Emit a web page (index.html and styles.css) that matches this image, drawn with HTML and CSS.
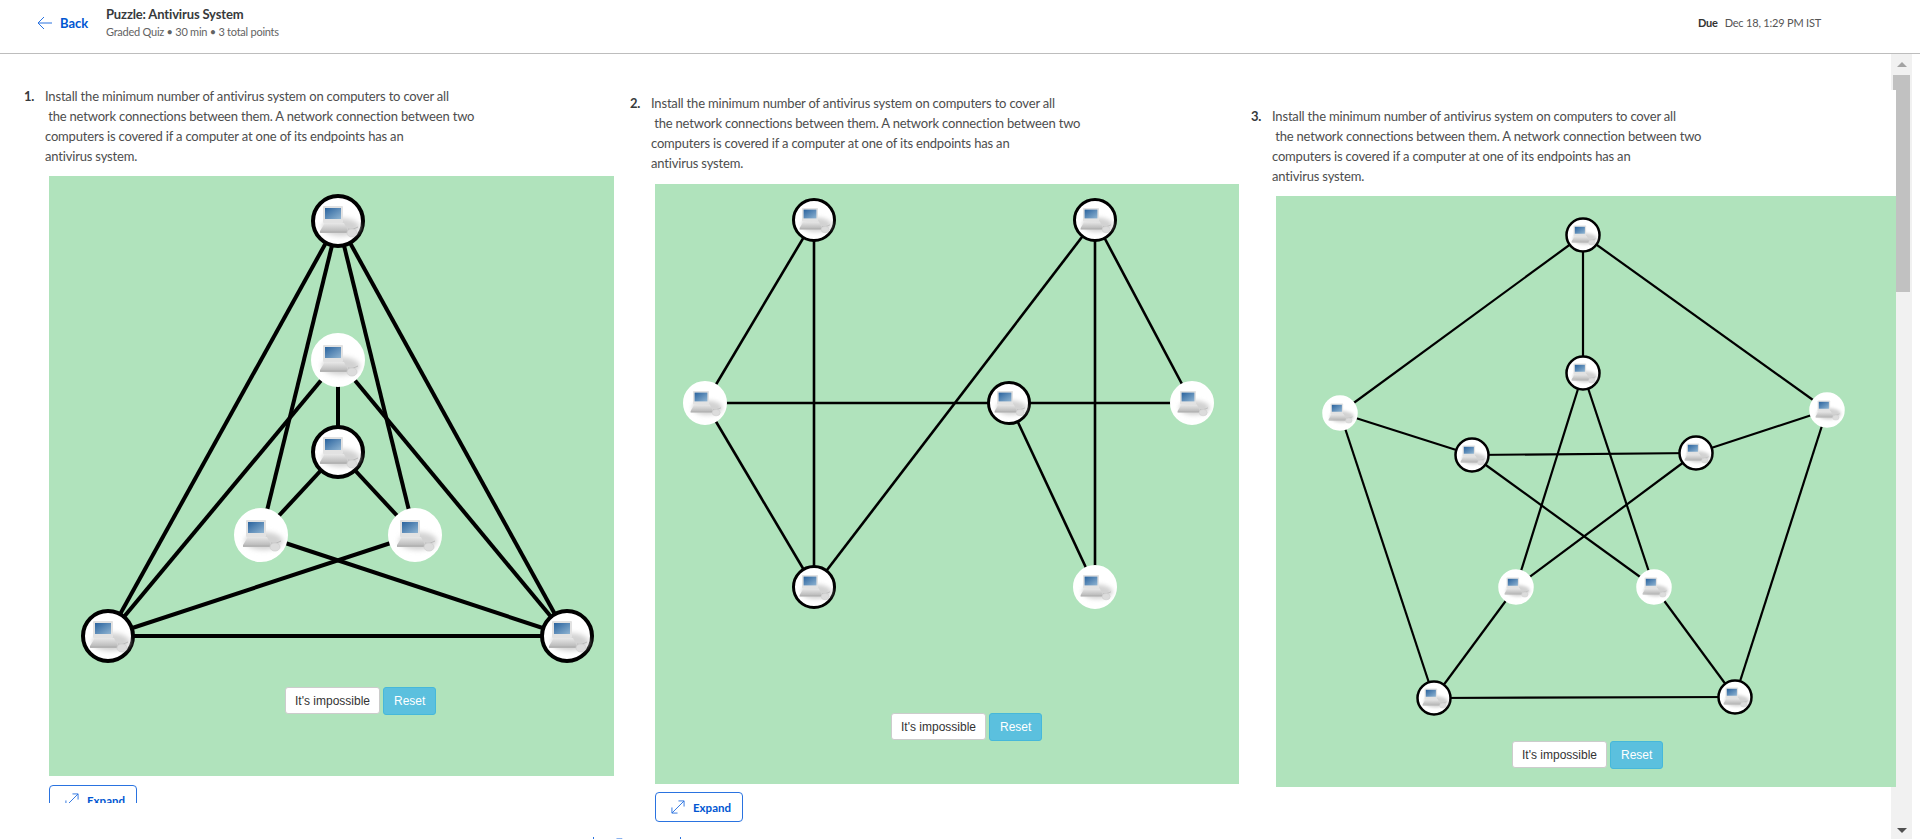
FILE: index.html
```html
<!DOCTYPE html>
<html lang="en">
<head>
    <meta charset="UTF-8">
    <title>Puzzle: Antivirus System</title>
    <link rel="stylesheet" href="styles.css">
</head>
<body>
    <header class="topbar">
        <a class="back" href="#">
            <svg class="back-icon" width="15" height="14" viewBox="0 0 15 14"><path d="M7 1 1 7l6 6M1 7h14"/></svg>
            <span>Back</span>
        </a>
        <div class="quiz-info">
            <div class="quiz-title">Puzzle: Antivirus System</div>
            <div class="quiz-meta">Graded Quiz &bull; 30 min &bull; 3 total points</div>
        </div>
        <div class="due"><b>Due</b><span>Dec 18, 1:29 PM IST</span></div>
    </header>

    <main class="content">
        <div class="scrollbar">
            <div class="arrow-up"></div>
            <div class="thumb"></div>
            <div class="arrow-down"></div>
        </div>

        <div class="columns">
            <!-- question 1 is cut off by its frame just under the expand button -->
            <section class="question question-1">
                <div class="prompt">
                    <span class="num">1.</span>
                    <div class="text">
                        <div>Install the minimum number of antivirus system on computers to cover all</div>
                        <div>&nbsp;the network connections between them. A network connection between two</div>
                        <div>computers is covered if a computer at one of its endpoints has an</div>
                        <div>antivirus system.</div>
                    </div>
                </div>
                <div class="panel panel-1">
                    <svg class="graph graph-lg">
                        <defs>
                            <linearGradient id="screen" x1="0" y1="0" x2="1" y2="1">
                                <stop offset="0" stop-color="#2a639e"/>
                                <stop offset="1" stop-color="#8fb4d2"/>
                            </linearGradient>
                            <linearGradient id="keys" x1="0" y1="0" x2="0" y2="1">
                                <stop offset="0" stop-color="#e8e8e8"/>
                                <stop offset="1" stop-color="#bcbcbc"/>
                            </linearGradient>
                            <filter id="soft" x="-30%" y="-30%" width="160%" height="160%">
                                <feGaussianBlur stdDeviation="2.5"/>
                            </filter>
                            <g id="pc">
                                <ellipse cx="3" cy="6" rx="19" ry="9" fill="#d2d2d2" filter="url(#soft)"/>
                                <rect x="-15" y="-15" width="20" height="17" rx="1" fill="#e2e2e2"/>
                                <rect x="-13" y="-13" width="16" height="11" fill="url(#screen)"/>
                                <path d="M-13 2H6l4 8H-18z" fill="url(#keys)"/>
                                <path d="M-18 10h28v2h-28z" fill="#b4b4b4"/>
                                <path d="M10 8c3 1 6 0 10-2" fill="none" stroke="#bbb" stroke-width="1"/>
                                <ellipse cx="14" cy="12" rx="5" ry="4" fill="#dcdcdc" stroke="#cfcfcf" stroke-width=".8"/>
                            </g>
                        </defs>
                        <g class="edges">
                            <line x1="289" y1="45" x2="59" y2="460"/>
                            <line x1="289" y1="45" x2="518" y2="460"/>
                            <line x1="289" y1="45" x2="212" y2="359"/>
                            <line x1="289" y1="45" x2="366" y2="359"/>
                            <line x1="289" y1="184" x2="289" y2="276"/>
                            <line x1="289" y1="184" x2="59" y2="460"/>
                            <line x1="289" y1="184" x2="518" y2="460"/>
                            <line x1="289" y1="276" x2="212" y2="359"/>
                            <line x1="289" y1="276" x2="366" y2="359"/>
                            <line x1="212" y1="359" x2="518" y2="460"/>
                            <line x1="366" y1="359" x2="59" y2="460"/>
                            <line x1="59" y1="460" x2="518" y2="460"/>
                        </g>
                        <g transform="translate(289 45)"><circle class="on" r="25"/><use href="#pc"/></g>
                        <g transform="translate(289 184)"><circle class="off" r="25"/><use href="#pc"/></g>
                        <g transform="translate(289 276)"><circle class="on" r="25"/><use href="#pc"/></g>
                        <g transform="translate(212 359)"><circle class="off" r="25"/><use href="#pc"/></g>
                        <g transform="translate(366 359)"><circle class="off" r="25"/><use href="#pc"/></g>
                        <g transform="translate(59 460)"><circle class="on" r="25"/><use href="#pc"/></g>
                        <g transform="translate(518 460)"><circle class="on" r="25"/><use href="#pc"/></g>
                    </svg>
                    <div class="actions">
                        <button class="btn">It's impossible</button>
                        <button class="btn btn-reset">Reset</button>
                    </div>
                </div>
                <a class="expand" href="#">
                    <svg class="expand-icon" width="14" height="14" viewBox="0 0 15 15"><path d="M1 14 14 1M8 1h6v6M1 8v6h6"/></svg>
                    <span>Expand</span>
                </a>
            </section>

            <section class="question question-2">
                <div class="prompt">
                    <span class="num">2.</span>
                    <div class="text">
                        <div>Install the minimum number of antivirus system on computers to cover all</div>
                        <div>&nbsp;the network connections between them. A network connection between two</div>
                        <div>computers is covered if a computer at one of its endpoints has an</div>
                        <div>antivirus system.</div>
                    </div>
                </div>
                <div class="panel panel-2">
                    <svg class="graph graph-md">
                        <g class="edges">
                            <line x1="159" y1="36" x2="50" y2="219"/>
                            <line x1="159" y1="36" x2="159" y2="403"/>
                            <line x1="50" y1="219" x2="159" y2="403"/>
                            <line x1="50" y1="219" x2="537" y2="219"/>
                            <line x1="440" y1="36" x2="159" y2="403"/>
                            <line x1="440" y1="36" x2="440" y2="403"/>
                            <line x1="440" y1="36" x2="537" y2="219"/>
                            <line x1="354" y1="219" x2="440" y2="403"/>
                        </g>
                        <g transform="translate(159 36)"><circle class="on" r="20.5"/><use href="#pc" transform="scale(.8)"/></g>
                        <g transform="translate(440 36)"><circle class="on" r="20.5"/><use href="#pc" transform="scale(.8)"/></g>
                        <g transform="translate(50 219)"><circle class="off" r="20.5"/><use href="#pc" transform="scale(.8)"/></g>
                        <g transform="translate(354 219)"><circle class="on" r="20.5"/><use href="#pc" transform="scale(.8)"/></g>
                        <g transform="translate(537 219)"><circle class="off" r="20.5"/><use href="#pc" transform="scale(.8)"/></g>
                        <g transform="translate(159 403)"><circle class="on" r="20.5"/><use href="#pc" transform="scale(.8)"/></g>
                        <g transform="translate(440 403)"><circle class="off" r="20.5"/><use href="#pc" transform="scale(.8)"/></g>
                    </svg>
                    <div class="actions">
                        <button class="btn">It's impossible</button>
                        <button class="btn btn-reset">Reset</button>
                    </div>
                </div>
                <a class="expand" href="#">
                    <svg class="expand-icon" width="14" height="14" viewBox="0 0 15 15"><path d="M1 14 14 1M8 1h6v6M1 8v6h6"/></svg>
                    <span>Expand</span>
                </a>
            </section>

            <section class="question question-3">
                <div class="prompt">
                    <span class="num">3.</span>
                    <div class="text">
                        <div>Install the minimum number of antivirus system on computers to cover all</div>
                        <div>&nbsp;the network connections between them. A network connection between two</div>
                        <div>computers is covered if a computer at one of its endpoints has an</div>
                        <div>antivirus system.</div>
                    </div>
                </div>
                <div class="panel panel-3">
                    <svg class="graph graph-sm">
                        <g class="edges">
                            <line x1="307" y1="39" x2="307" y2="177"/>
                            <line x1="307" y1="39" x2="64" y2="217"/>
                            <line x1="307" y1="39" x2="551" y2="214"/>
                            <line x1="64" y1="217" x2="196" y2="259"/>
                            <line x1="551" y1="214" x2="420" y2="257"/>
                            <line x1="64" y1="217" x2="158" y2="502"/>
                            <line x1="551" y1="214" x2="459" y2="501"/>
                            <line x1="158" y1="502" x2="459" y2="501"/>
                            <line x1="196" y1="259" x2="420" y2="257"/>
                            <line x1="307" y1="177" x2="240" y2="391"/>
                            <line x1="307" y1="177" x2="378" y2="391"/>
                            <line x1="196" y1="259" x2="378" y2="391"/>
                            <line x1="420" y1="257" x2="240" y2="391"/>
                            <line x1="240" y1="391" x2="158" y2="502"/>
                            <line x1="378" y1="391" x2="459" y2="501"/>
                        </g>
                        <g transform="translate(307 39)"><circle class="on" r="16.5"/><use href="#pc" transform="scale(.63)"/></g>
                        <g transform="translate(307 177)"><circle class="on" r="16.5"/><use href="#pc" transform="scale(.63)"/></g>
                        <g transform="translate(64 217)"><circle class="off" r="16.5"/><use href="#pc" transform="scale(.63)"/></g>
                        <g transform="translate(196 259)"><circle class="on" r="16.5"/><use href="#pc" transform="scale(.63)"/></g>
                        <g transform="translate(551 214)"><circle class="off" r="16.5"/><use href="#pc" transform="scale(.63)"/></g>
                        <g transform="translate(420 257)"><circle class="on" r="16.5"/><use href="#pc" transform="scale(.63)"/></g>
                        <g transform="translate(240 391)"><circle class="off" r="16.5"/><use href="#pc" transform="scale(.63)"/></g>
                        <g transform="translate(378 391)"><circle class="off" r="16.5"/><use href="#pc" transform="scale(.63)"/></g>
                        <g transform="translate(158 502)"><circle class="on" r="16.5"/><use href="#pc" transform="scale(.63)"/></g>
                        <g transform="translate(459 501)"><circle class="on" r="16.5"/><use href="#pc" transform="scale(.63)"/></g>
                    </svg>
                    <div class="actions">
                        <button class="btn">It's impossible</button>
                        <button class="btn btn-reset">Reset</button>
                    </div>
                </div>
            </section>
        </div>

        <!-- next row of the scrolling page, only its top edge shows -->
        <div class="next-row">
            <a class="expand" href="#">
                <svg class="expand-icon" width="14" height="14" viewBox="0 0 15 15"><path d="M1 14 14 1M8 1h6v6M1 8v6h6"/></svg>
                <span>Expand</span>
            </a>
        </div>
    </main>
</body>
</html>
```

FILE: styles.css
```css
body {
    margin: 0;
    height: 839px;
    overflow: hidden;
    background: #fff;
    color: #373a3c;
    font-family: Lato, "Noto Sans", sans-serif;
    font-size: 14px;
}
a {
    text-decoration: none;
}

/* top bar */
.topbar {
    display: flex;
    align-items: center;
    box-sizing: border-box;
    height: 54px;
    padding: 0 0 8px 37px;
    border-bottom: 1px solid #bdbdbd;
}
.back {
    display: flex;
    align-items: center;
    gap: 8px;
    width: 69px;
    color: #0056d2;
    font-weight: 700;
    font-size: 13px;
}
.back-icon {
    fill: none;
    stroke: #2a73e0;
    stroke-width: 1;
}
.quiz-title {
    color: #373a3c;
    font-weight: 700;
    font-size: 13px;
    line-height: 18px;
    letter-spacing: -0.15px;
}
.quiz-meta {
    color: #636363;
    font-size: 11px;
    line-height: 18px;
    letter-spacing: -0.25px;
}
.due {
    display: flex;
    gap: 7px;
    margin-left: auto;
    margin-right: 99px;
    font-size: 11px;
    letter-spacing: -0.2px;
    color: #555;
}
.due b {
    color: #333;
}

/* page body */
.content {
    position: relative;
    height: 785px;
    overflow: hidden;
}
.scrollbar {
    position: absolute;
    top: 0;
    bottom: 0;
    left: 1891px;
    width: 21px;
    display: flex;
    flex-direction: column;
    align-items: flex-end;
    background: #f1f1f1;
}
.thumb {
    width: 17px;
    height: 217px;
    margin: 8px 2px 0 0;
    background: #c1c1c1;
}
.arrow-up,
.arrow-down {
    width: 0;
    height: 0;
    border-left: 5px solid transparent;
    border-right: 5px solid transparent;
}
.arrow-up {
    margin: 8px 5px 0 0;
    border-bottom: 5px solid #a3a3a3;
}
.arrow-down {
    margin: auto 5px 6px 0;
    border-top: 5px solid #505050;
}

.columns {
    display: flex;
    align-items: flex-start;
    height: 783px;
    padding-left: 24px;
}
.question {
    flex: none;
    position: relative;
}
.question-1 {
    width: 606px;
    height: 717px;
    margin-top: 32px;
    overflow: hidden;
}
.question-2 {
    width: 621px;
    margin-top: 39px;
}
.question-2 .prompt {
    margin-bottom: 11px;
}
.question-3 {
    width: 645px;
    margin-top: 36px;
    padding-top: 16px;
    background: #fff;
}

.prompt {
    display: flex;
    margin-bottom: 10px;
    line-height: 20px;
    letter-spacing: -0.18px;
}
.num {
    width: 21px;
    font-weight: 700;
    font-size: 13px;
}
.text {
    font-size: 13px;
    color: #4d4d4d;
}

/* green puzzle area */
.panel {
    display: flex;
    flex-direction: column;
    margin-left: 25px;
    background: #b0e3bc;
}
.panel-1 {
    width: 565px;
    height: 600px;
}
.panel-2 {
    width: 584px;
    height: 600px;
}
.panel-3 {
    width: 620px;
    height: 591px;
}
.graph {
    display: block;
    width: 100%;
}
.graph-lg {
    height: 511px;
}
.graph-md {
    height: 529px;
}
.graph-sm {
    height: 545px;
}
.edges line {
    stroke: #000;
}
.graph-lg .edges line {
    stroke-width: 4;
}
.graph-md .edges line {
    stroke-width: 2.6;
}
.graph-sm .edges line {
    stroke-width: 2.2;
}
.graph circle {
    fill: #fff;
    stroke-width: 4;
}
.graph-md circle {
    stroke-width: 3;
}
.graph-sm circle {
    stroke-width: 2.5;
}
.graph .on {
    stroke: #000;
}
.graph .off {
    stroke: #fff;
}

.actions {
    display: flex;
    align-items: flex-start;
    gap: 3px;
    margin-left: 236px;
}
.btn {
    height: 27px;
    padding: 0 9px;
    background: #fff;
    border: 1px solid #ccc;
    border-radius: 3px;
    color: #333;
    font-family: "Liberation Sans", Arial, sans-serif;
    font-size: 12px;
}
.btn-reset {
    height: 28px;
    padding: 0 10px;
    background: #5bc0de;
    border-color: #46b8da;
    color: #fff;
}

.expand {
    display: flex;
    align-items: center;
    gap: 8px;
    box-sizing: border-box;
    width: 88px;
    height: 30px;
    padding-left: 15px;
    background: #fff;
    border: 1px solid #2a73e0;
    border-radius: 4px;
    color: #0056d2;
    font-weight: 700;
    font-size: 11.5px;
}
.question .expand {
    margin: 8px 0 0 25px;
}
.question-1 .expand {
    margin-top: 9px;
}
.expand-icon {
    flex: none;
    fill: none;
    stroke: #2a73e0;
    stroke-width: 1;
}
.next-row {
    height: 2px;
    padding-left: 593px;
    overflow: hidden;
}
.next-row .expand {
    margin-top: -7px;
}
```
